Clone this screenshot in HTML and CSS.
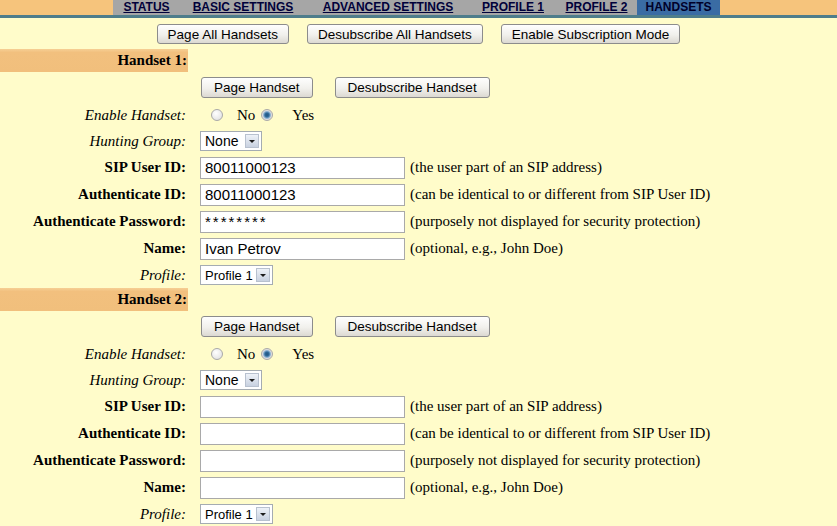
FILE: index.html
```html
<!DOCTYPE html>
<html lang="en">
<head>
    <meta charset="UTF-8">
    <title>Handsets</title>
    <link rel="stylesheet" href="styles.css">
</head>
<body>
    <div class="topnav">
        <div class="tabs">
            <a href="#">STATUS</a>
            <a href="#">BASIC SETTINGS</a>
            <a href="#">ADVANCED SETTINGS</a>
            <a href="#">PROFILE 1</a>
            <a href="#">PROFILE 2</a>
            <a href="#" class="current">HANDSETS</a>
        </div>
    </div>

    <div class="actions">
        <button type="button">Page All Handsets</button>
        <button type="button">Desubscribe All Handsets</button>
        <button type="button">Enable Subscription Mode</button>
    </div>

    <form>
        <div class="handset">
            <div class="hs-head">Handset 1:</div>
            <div class="row btns">
                <span class="label"></span>
                <div class="ctrl">
                    <button type="button" class="hs-btn">Page Handset</button>
                    <button type="button" class="hs-btn">Desubscribe Handset</button>
                </div>
            </div>
            <div class="row short">
                <span class="label em">Enable Handset:</span>
                <div class="ctrl">
                    <span class="radio first"></span><span class="opt">No</span>
                    <span class="radio checked"></span><span class="opt yes">Yes</span>
                </div>
            </div>
            <div class="row short">
                <span class="label em">Hunting Group:</span>
                <div class="ctrl">
                    <span class="select group">None<span class="arrow"></span></span>
                </div>
            </div>
            <div class="row">
                <span class="label">SIP User ID:</span>
                <div class="ctrl">
                    <input type="text" value="80011000123">
                    <span class="hint">(the user part of an SIP address)</span>
                </div>
            </div>
            <div class="row">
                <span class="label">Authenticate ID:</span>
                <div class="ctrl">
                    <input type="text" value="80011000123">
                    <span class="hint">(can be identical to or different from SIP User ID)</span>
                </div>
            </div>
            <div class="row">
                <span class="label">Authenticate Password:</span>
                <div class="ctrl">
                    <input type="text" class="pw" value="********">
                    <span class="hint">(purposely not displayed for security protection)</span>
                </div>
            </div>
            <div class="row">
                <span class="label">Name:</span>
                <div class="ctrl">
                    <input type="text" value="Ivan Petrov">
                    <span class="hint">(optional, e.g., John Doe)</span>
                </div>
            </div>
            <div class="row short">
                <span class="label em">Profile:</span>
                <div class="ctrl">
                    <span class="select profile">Profile 1<span class="arrow"></span></span>
                </div>
            </div>
        </div>

        <div class="handset">
            <div class="hs-head">Handset 2:</div>
            <div class="row btns">
                <span class="label"></span>
                <div class="ctrl">
                    <button type="button" class="hs-btn">Page Handset</button>
                    <button type="button" class="hs-btn">Desubscribe Handset</button>
                </div>
            </div>
            <div class="row short">
                <span class="label em">Enable Handset:</span>
                <div class="ctrl">
                    <span class="radio first"></span><span class="opt">No</span>
                    <span class="radio checked"></span><span class="opt yes">Yes</span>
                </div>
            </div>
            <div class="row short">
                <span class="label em">Hunting Group:</span>
                <div class="ctrl">
                    <span class="select group">None<span class="arrow"></span></span>
                </div>
            </div>
            <div class="row">
                <span class="label">SIP User ID:</span>
                <div class="ctrl">
                    <input type="text">
                    <span class="hint">(the user part of an SIP address)</span>
                </div>
            </div>
            <div class="row">
                <span class="label">Authenticate ID:</span>
                <div class="ctrl">
                    <input type="text">
                    <span class="hint">(can be identical to or different from SIP User ID)</span>
                </div>
            </div>
            <div class="row">
                <span class="label">Authenticate Password:</span>
                <div class="ctrl">
                    <input type="text">
                    <span class="hint">(purposely not displayed for security protection)</span>
                </div>
            </div>
            <div class="row">
                <span class="label">Name:</span>
                <div class="ctrl">
                    <input type="text">
                    <span class="hint">(optional, e.g., John Doe)</span>
                </div>
            </div>
            <div class="row short">
                <span class="label em">Profile:</span>
                <div class="ctrl">
                    <span class="select profile">Profile 1<span class="arrow"></span></span>
                </div>
            </div>
        </div>
    </form>
</body>
</html>
```

FILE: styles.css
```css
body {
    margin: 0;
    background-color: #fffcca;
    font-family: "Liberation Serif", "Times New Roman", serif;
    font-size: 15px;
    color: #000;
}

/* top tab bar */
.topnav {
    display: flex;
    justify-content: center;
    height: 15px;
    background-color: #f6c47c;
    border-bottom: 3px solid #4e7d8b;
}
.tabs {
    display: grid;
    grid-template-columns: 67px 126px 164px 86px 81px 83px;
    margin-right: 4px;
    background-color: #a6a6a6;
}
.tabs a {
    font: bold 12px/15px "Liberation Sans", Arial, sans-serif;
    color: #00003a;
    text-align: center;
    text-decoration: underline;
}
.tabs a.current {
    background-color: #3a6ca4;
    color: #00002a;
    text-decoration: none;
}

/* buttons */
button {
    height: 20px;
    padding: 0 10px;
    font: 13.5px "Liberation Sans", Arial, sans-serif;
    color: #000;
    border: 1px solid #8c8c8c;
    border-radius: 3px;
    background: linear-gradient(#fefefe, #f1f0ec 55%, #dcd9d2);
}
.actions {
    display: flex;
    justify-content: center;
    gap: 18px;
    padding: 6px 0 5px;
}
.hs-btn {
    height: 21px;
    padding: 0 12px;
}
.hs-btn + .hs-btn {
    margin-left: 22px;
}

/* handset blocks */
.hs-head {
    width: 188px;
    height: 23px;
    line-height: 23px;
    box-sizing: border-box;
    padding-right: 1px;
    text-align: right;
    font-weight: bold;
    background: linear-gradient(#f6cf94, #f2c07e 15%, #f1bf7c);
}
.row {
    display: flex;
    align-items: center;
    height: 27px;
}
.row.short {
    height: 26px;
}
.row.btns {
    height: 30px;
}
.label {
    flex: none;
    width: 188px;
    box-sizing: border-box;
    padding-right: 2px;
    margin-right: 12px;
    text-align: right;
    font-weight: bold;
}
.label.em {
    font-weight: normal;
    font-style: italic;
}
.ctrl {
    display: flex;
    align-items: center;
}
.btns .ctrl {
    padding-left: 1px;
}

/* radios */
.radio {
    width: 12px;
    height: 12px;
    box-sizing: border-box;
    border-radius: 50%;
    border: 1px solid #a9a9a9;
    background: radial-gradient(circle at 40% 35%, #ffffff, #dcdcdc);
}
.radio.first {
    margin-left: 11px;
}
.radio.checked {
    margin-left: 6px;
    background: radial-gradient(circle, #24557f 0, #2d6a9a 2px, #8fb3d3 3.5px, #dedede 4.5px, #f2f2f2);
}
.opt {
    margin-left: 14px;
}
.opt.yes {
    margin-left: 19px;
}

/* fake selects */
.select {
    display: flex;
    align-items: center;
    justify-content: space-between;
    height: 20px;
    box-sizing: border-box;
    padding-left: 4px;
    border: 1px solid #a5acb2;
    background-color: #fff;
    font: 14px "Liberation Sans", Arial, sans-serif;
    white-space: nowrap;
}
.select.group {
    width: 62px;
}
.select.profile {
    width: 73px;
    font-size: 13px;
}
.arrow {
    position: relative;
    flex: none;
    width: 14px;
    height: 14px;
    margin-right: 2px;
    box-sizing: border-box;
    border: 1px solid #b8c1cf;
    background: linear-gradient(#eef2f8, #c8d1e0);
}
.arrow::after {
    content: "";
    position: absolute;
    left: 3px;
    top: 5px;
    border-left: 3px solid transparent;
    border-right: 3px solid transparent;
    border-top: 3px solid #1c1c1c;
}

/* text fields */
input {
    width: 205px;
    height: 22px;
    box-sizing: border-box;
    margin: 0;
    padding: 0 4px;
    border: 1px solid #a9a9a9;
    background-color: #fff;
    font: 15px "Liberation Sans", Arial, sans-serif;
    color: #000;
}
input.pw {
    letter-spacing: 2px;
}
.hint {
    margin-left: 5px;
}
```
